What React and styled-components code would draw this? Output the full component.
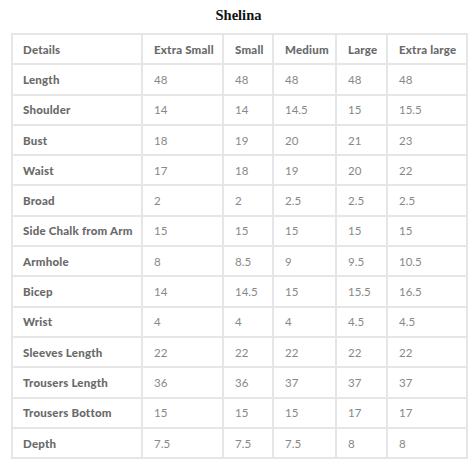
import React from "react";
import styled, { createGlobalStyle } from "styled-components";

const Global = createGlobalStyle`
  html, body { margin: 0; padding: 0; background: #fff; }
  body { font-family: "Lato", "Liberation Sans", sans-serif; }
`;

const Page = styled.div`
  padding: 6px 9px 0 11px;
  width: 475px;
  box-sizing: border-box;
`;

const Title = styled.h2`
  margin: 0 0 9px 0;
  text-align: center;
  font-family: "Liberation Serif", "DejaVu Serif", serif;
  font-weight: bold;
  font-size: 14.5px;
  line-height: 18px;
  color: #111;
`;

const Table = styled.table`
  width: 455px;
  table-layout: fixed;
  border-collapse: separate;
  border-spacing: 0;
  border: 1px solid #e6e6e6;
`;

const Cell = styled.td`
  border: 1px solid #e6e6e6;
  height: 28.3px;
  padding: 0 0 0 ${(p) => (p.$first ? 10 : 11)}px;
  font-size: 11.5px;
  font-weight: ${(p) => (p.$bold ? 900 : 400)};
  letter-spacing: ${(p) => (p.$bold ? "0.2px" : "0")};
  color: ${(p) => (p.$bold ? "#6a6a6a" : "#888")};
  text-align: left;
  vertical-align: middle;
  white-space: nowrap;
  overflow: hidden;
`;

const widths = [130, 81, 50, 63, 51, 80];
const headers = ["Details", "Extra Small", "Small", "Medium", "Large", "Extra large"];
const rows = [
  ["Length", "48", "48", "48", "48", "48"],
  ["Shoulder", "14", "14", "14.5", "15", "15.5"],
  ["Bust", "18", "19", "20", "21", "23"],
  ["Waist", "17", "18", "19", "20", "22"],
  ["Broad", "2", "2", "2.5", "2.5", "2.5"],
  ["Side Chalk from Arm", "15", "15", "15", "15", "15"],
  ["Armhole", "8", "8.5", "9", "9.5", "10.5"],
  ["Bicep", "14", "14.5", "15", "15.5", "16.5"],
  ["Wrist", "4", "4", "4", "4.5", "4.5"],
  ["Sleeves Length", "22", "22", "22", "22", "22"],
  ["Trousers Length", "36", "36", "37", "37", "37"],
  ["Trousers Bottom", "15", "15", "15", "17", "17"],
  ["Depth", "7.5", "7.5", "7.5", "8", "8"],
];

export default function App() {
  return (
    <Page>
      <Global />
      <Title>Shelina</Title>
      <Table>
        <colgroup>
          {widths.map((w, i) => (
            <col key={i} style={{ width: w }} />
          ))}
        </colgroup>
        <tbody>
          <tr>
            {headers.map((h, i) => (
              <Cell key={i} $bold $first={i === 0}>{h}</Cell>
            ))}
          </tr>
          {rows.map((r, ri) => (
            <tr key={ri}>
              {r.map((v, i) => (
                <Cell key={i} $bold={i === 0} $first={i === 0}>{v}</Cell>
              ))}
            </tr>
          ))}
        </tbody>
      </Table>
    </Page>
  );
}
